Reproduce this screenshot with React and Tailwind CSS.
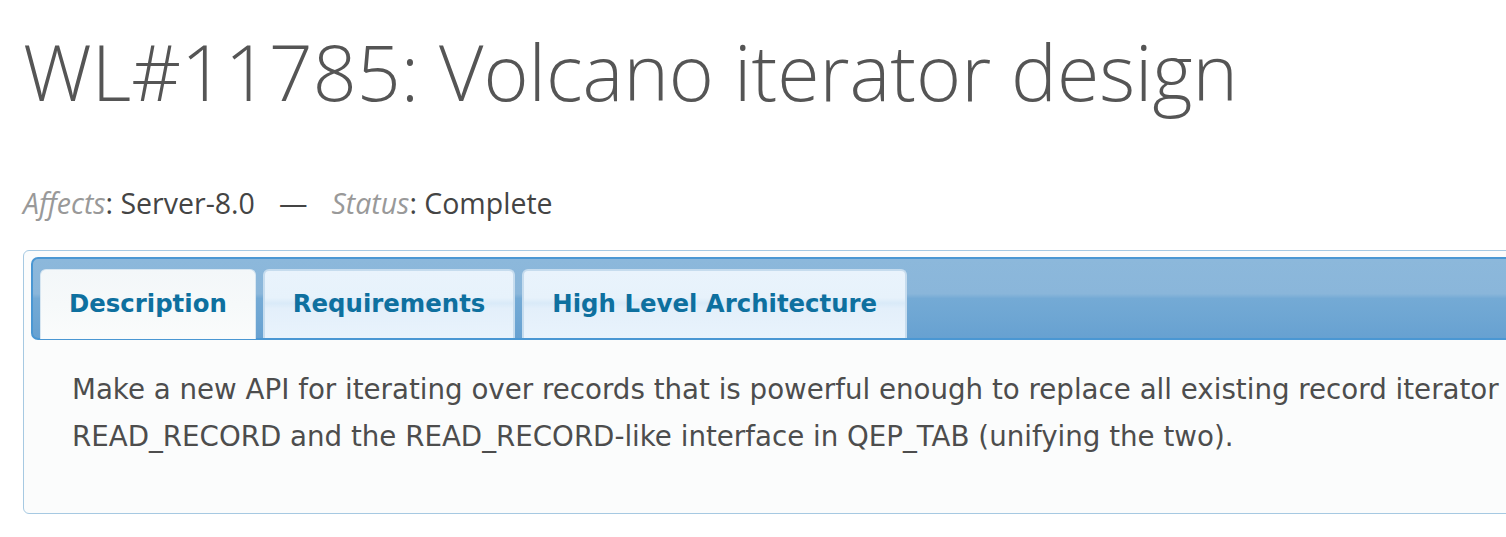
import React from 'react';

const tabs = [
  { label: 'Description', active: true },
  { label: 'Requirements' },
  { label: 'High Level Architecture' },
];

function Tab({ label, active }) {
  if (active) {
    return (
      <div className="relative -mb-[2px] flex h-[70px] items-center rounded-t-[6px] border border-b-0 border-[#d7e6f1] bg-[linear-gradient(180deg,#f3f7f9_0%,#f6f9fa_50%,#fafcfc_100%)] px-[28px]">
        <span className="text-[24.4px] font-bold text-[#0e709f]">{label}</span>
      </div>
    );
  }
  return (
    <div className="flex h-[69px] items-center rounded-t-[6px] border-2 border-b-0 border-[#c6dcee] bg-[linear-gradient(180deg,#e9f3fc_0%,#e7f2fb_40%,#d9eaf8_48%,#e3effa_56%,#e9f3fc_100%)] px-[28px]">
      <span className="text-[24.4px] font-bold text-[#0e709f]">{label}</span>
    </div>
  );
}

export default function App() {
  return (
    <div className="h-[537px] w-[1506px] overflow-hidden bg-white">
      <div className="w-[1800px] pl-[23px]">
        <h1 className="mt-[33px] font-['Open_Sans',sans-serif] text-[77px] font-light leading-none text-[#555555]">
          WL#11785: Volcano iterator design
        </h1>

        <div className="mt-[79px] font-['Open_Sans',sans-serif] text-[28.5px] leading-none text-[#444444]">
          <em className="text-[#999999]">Affects</em>: Server-8.0
          <span className="mx-[24px] text-[#444444]">—</span>
          <em className="text-[#999999]">Status</em>: Complete
        </div>

        <div className="mt-[32px] rounded-[6px] border border-[#a6c9e2] bg-[#fbfcfc] px-[7px] pt-[6px] pb-[53px] font-['DejaVu_Sans',sans-serif]">
          <div className="flex gap-[7px] rounded-[7px] border-2 border-[#4a97d3] bg-[linear-gradient(180deg,#8cb8db_0%,#8ab6da_44%,#74aad5_50%,#6ea6d3_75%,#67a1d1_100%)] px-[7px] pt-[10px]">
            {tabs.map((t) => (
              <Tab key={t.label} {...t} />
            ))}
          </div>
          <p className="pl-[41px] pt-[26px] text-[27.7px] leading-[47px] text-[#4d4d4d]">
            Make a new API for iterating over records that is powerful enough to replace all existing record iterator
            <br />
            READ_RECORD and the READ_RECORD-like interface in QEP_TAB (unifying the two).
          </p>
        </div>
      </div>
    </div>
  );
}
